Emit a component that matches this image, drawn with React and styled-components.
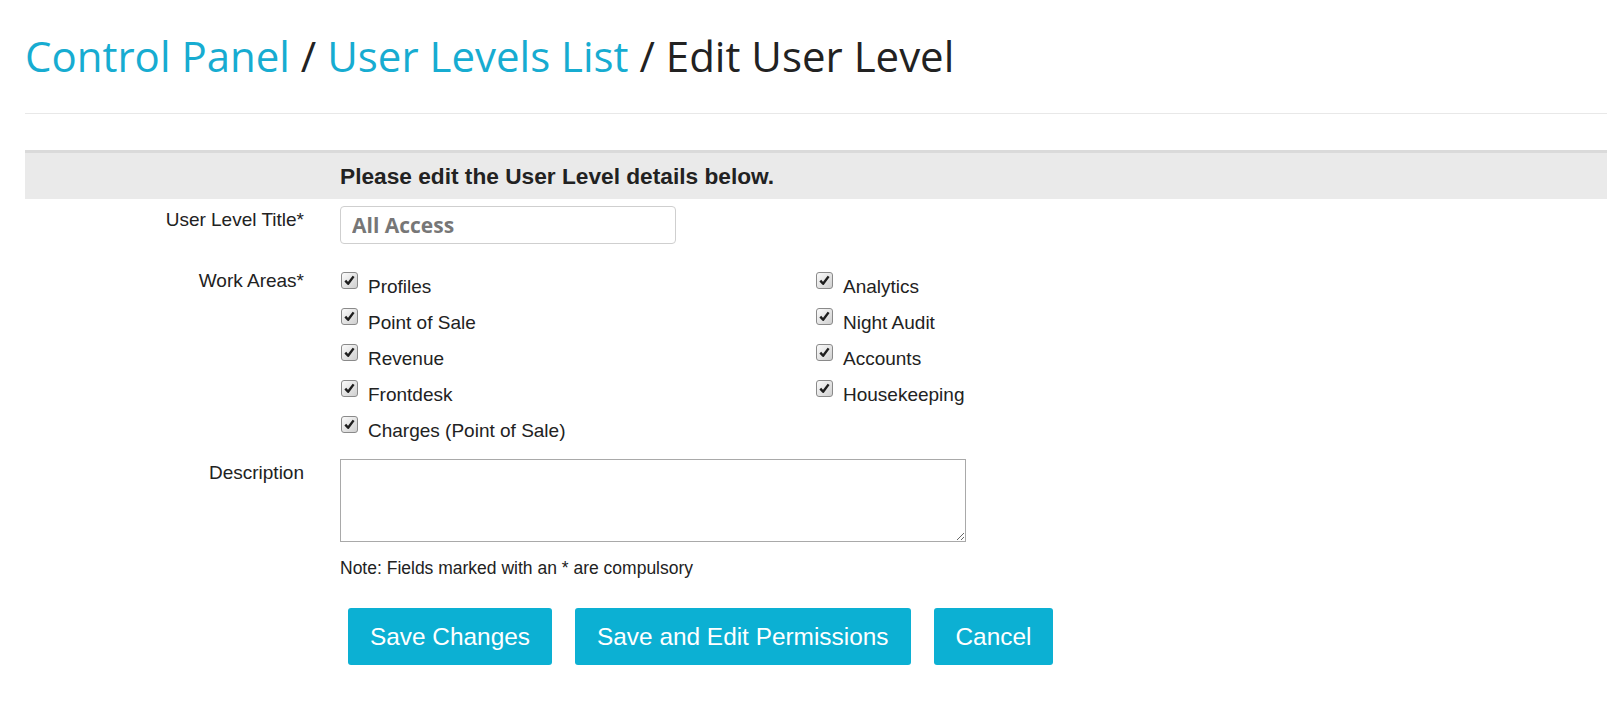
import React, { useState } from 'react';
import styled, { createGlobalStyle } from 'styled-components';

const GlobalStyle = createGlobalStyle`
  html, body {
    margin: 0;
    padding: 0;
    background: #fff;
    overflow: hidden;
  }
  body {
    font-family: "Liberation Sans", Arial, sans-serif;
    color: #333;
  }
`;

const Page = styled.div`
  padding: 33px 0 0 25px;
`;

const Title = styled.h1`
  margin: 0;
  font-family: "Open Sans", sans-serif;
  font-weight: 400;
  font-size: 42px;
  line-height: 46px;
  color: #222;
  white-space: nowrap;
`;

const Crumb = styled.a`
  color: #17acd1;
  text-decoration: none;
`;

const Rule = styled.hr`
  margin: 34px 0 36px;
  border: 0;
  border-top: 1px solid #e8e8e8;
`;

const Banner = styled.div`
  display: grid;
  grid-template-columns: 315px 1fr;
  background: #eaeaea;
  border-top: 3px solid #dadada;
  height: 46px;
`;

const BannerText = styled.h2`
  grid-column: 2;
  margin: 0;
  font-size: 22.7px;
  line-height: 47px;
  font-weight: 700;
  color: #222;
`;

const Row = styled.div`
  display: grid;
  grid-template-columns: 315px 1fr;
  margin-top: ${(p) => p.$gap}px;
`;

const Label = styled.label`
  text-align: right;
  padding: 2px 36px 0 0;
  font-size: 19px;
  line-height: 23px;
  color: #222;
`;

const TextInput = styled.input`
  box-sizing: border-box;
  width: 336px;
  height: 38px;
  padding: 0 11px;
  border: 1px solid #cfcfcf;
  border-radius: 4px;
  font-family: "Open Sans", sans-serif;
  font-weight: 700;
  font-size: 21px;
  color: #777;
  outline: none;
`;

const Areas = styled.div`
  display: grid;
  grid-template-columns: 475px 475px;
  grid-auto-flow: column;
  grid-template-rows: repeat(5, 36px);
  padding-top: 2px;
`;

const Area = styled.label`
  display: flex;
  align-items: flex-start;
  gap: 10px;
  font-size: 19px;
  line-height: 36px;
  color: #222;
  cursor: pointer;
`;

const Box = styled.span`
  box-sizing: border-box;
  flex: none;
  width: 17px;
  height: 17px;
  margin: 3px 0 0 1px;
  border: 1px solid #8a8a8a;
  border-radius: 3px;
  background: linear-gradient(135deg, #fbfbfb, #cfcfcf);
  display: flex;
  align-items: center;
  justify-content: center;
`;

const TextBox = styled.textarea`
  box-sizing: border-box;
  width: 626px;
  height: 83px;
  border: 1px solid #a9a9a9;
  border-radius: 0;
  display: block;
  font-family: "Liberation Sans", Arial, sans-serif;
  font-size: 16px;
`;

const Note = styled.p`
  margin: 16px 0 0;
  font-size: 17.5px;
  line-height: 21px;
  color: #222;
`;

const Actions = styled.div`
  display: flex;
  gap: 23px;
  margin: 29px 0 0 8px;
`;

const Button = styled.button`
  height: 57px;
  padding: 0 22px;
  border: 0;
  border-radius: 3px;
  background: #0cb0d3;
  color: #fff;
  font-family: "Liberation Sans", Arial, sans-serif;
  font-size: 24.4px;
  cursor: pointer;
`;

const workAreas = [
  'Profiles',
  'Point of Sale',
  'Revenue',
  'Frontdesk',
  'Charges (Point of Sale)',
  'Analytics',
  'Night Audit',
  'Accounts',
  'Housekeeping',
];

const Check = () => (
  <svg width="11" height="11" viewBox="0 0 11 11">
    <path d="M1.3 5.6 L4.1 8.8 L9.6 1.4" fill="none" stroke="#1e1e1e" strokeWidth="2.4" strokeLinejoin="round" />
  </svg>
);

const App = () => {
  const [title, setTitle] = useState('All Access');
  const [checked, setChecked] = useState(workAreas.map(() => true));

  const toggle = (i) => {
    setChecked(checked.map((c, j) => (j === i ? !c : c)));
  };

  return (
    <Page>
      <GlobalStyle />
      <Title>
        <Crumb href="#">Control Panel</Crumb> / <Crumb href="#">User Levels List</Crumb> / Edit User Level
      </Title>
      <Rule />
      <Banner>
        <BannerText>Please edit the User Level details below.</BannerText>
      </Banner>
      <Row $gap={7}>
        <Label>User Level Title*</Label>
        <div>
          <TextInput value={title} onChange={(e) => setTitle(e.target.value)} />
        </div>
      </Row>
      <Row $gap={23}>
        <Label>Work Areas*</Label>
        <Areas>
          {workAreas.map((name, i) => (
            <Area key={name} onClick={() => toggle(i)}>
              <Box>{checked[i] && <Check />}</Box>
              {name}
            </Area>
          ))}
        </Areas>
      </Row>
      <Row $gap={10}>
        <Label>Description</Label>
        <div>
          <TextBox />
          <Note>Note: Fields marked with an * are compulsory</Note>
          <Actions>
            <Button>Save Changes</Button>
            <Button>Save and Edit Permissions</Button>
            <Button>Cancel</Button>
          </Actions>
        </div>
      </Row>
    </Page>
  );
};

export default App;
